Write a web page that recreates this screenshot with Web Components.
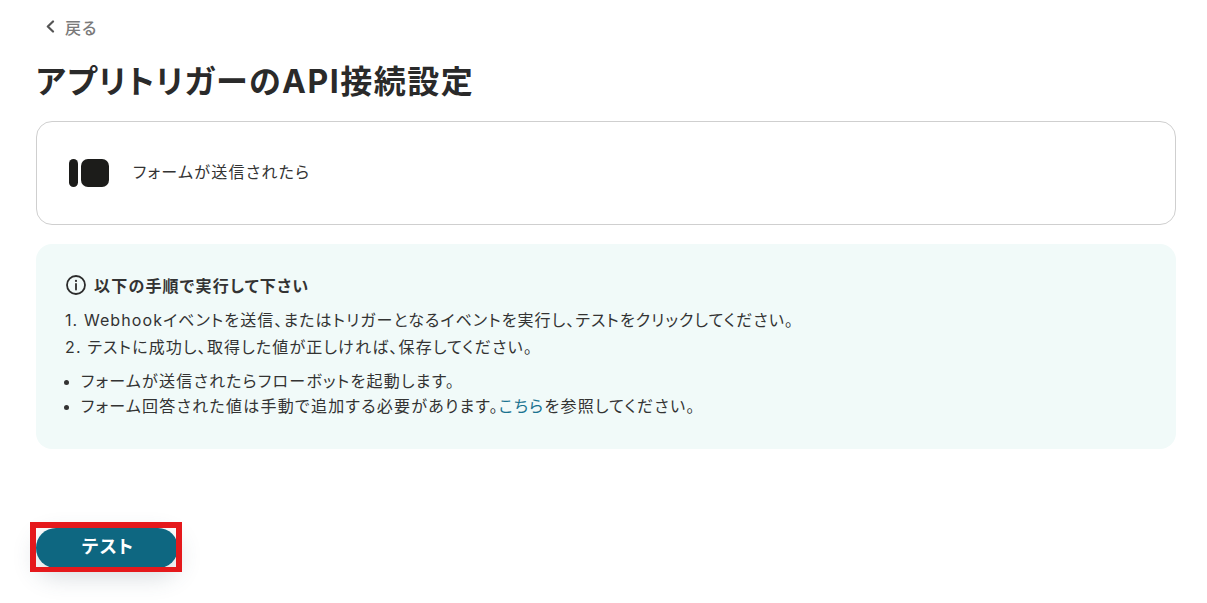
<!DOCTYPE html>
<html lang="ja">
<head>
<meta charset="utf-8">
<title>アプリトリガーのAPI接続設定</title>
<style>
  html, body { margin: 0; background: #fff; }
  body {
    font-family: Inter, "Noto Sans CJK JP", "Noto Sans", sans-serif;
    font-feature-settings: "palt";
    letter-spacing: .075em;
    color: #2c2c2c;
    height: 603px;
    overflow: hidden;
  }
</style>
</head>
<body>
<trigger-page>
  <back-link slot="back">戻る</back-link>
  <span slot="title">アプリトリガーのAPI接続設定</span>
  <app-card slot="card">フォームが送信されたら</app-card>
  <notice-box slot="notice"></notice-box>
  <test-button slot="action">テスト</test-button>
</trigger-page>

<script>
class TriggerPage extends HTMLElement {
  constructor() {
    super()
    this.attachShadow({ mode: 'open' })
    this.shadowRoot.innerHTML = `
    <style>
      :host { display: block; padding: 0 31px 0 36px; }
      .title {
        margin: 0;
        font-size: 32px;
        line-height: 44px;
        font-weight: 700;
        letter-spacing: 1.5px;
        color: #2a2a2a;
        padding-top: 21px;
        padding-bottom: 17px;
      }
      .stack { display: flex; flex-direction: column; gap: 19px; }
      .action { padding-top: 79px; }
    </style>
    <slot name="back"></slot>
    <h1 class="title"><slot name="title"></slot></h1>
    <div class="stack">
      <slot name="card"></slot>
      <slot name="notice"></slot>
    </div>
    <div class="action"><slot name="action"></slot></div>
    `
  }
}

class BackLink extends HTMLElement {
  constructor() {
    super()
    this.attachShadow({ mode: 'open' })
    this.shadowRoot.innerHTML = `
    <style>
      :host {
        display: flex;
        align-items: center;
        gap: 8px;
        height: 25px;
        padding: 14px 0 0 8px;
        font-size: 16px;
        font-weight: 500;
        color: #7a7a7a;
        letter-spacing: .06em;
      }
      svg { width: 13px; height: 13px; }
    </style>
    <svg viewBox="0 0 13 13" fill="none" stroke="#555" stroke-width="2.2" stroke-linecap="round" stroke-linejoin="round"><path d="M9 1.5 3.8 6.5 9 11.5"/></svg>
    <slot></slot>
    `
  }
}

class AppCard extends HTMLElement {
  constructor() {
    super()
    this.attachShadow({ mode: 'open' })
    this.shadowRoot.innerHTML = `
    <style>
      :host {
        display: flex;
        align-items: center;
        gap: 23px;
        box-sizing: border-box;
        height: 104px;
        padding: 0 0 0 31px;
        border: 1px solid #cfcfcf;
        border-radius: 16px;
        font-size: 16px;
        letter-spacing: .08em;
        color: #333;
      }
      svg { width: 42px; height: 28px; display: block; }
      .label { padding-bottom: 4px; }
    </style>
    <svg viewBox="0 0 42 28" fill="#1c1c1a">
      <rect x="1" y="0" width="9" height="28" rx="4.5"/>
      <rect x="13" y="0" width="28" height="28" rx="7"/>
    </svg>
    <div class="label"><slot></slot></div>
    `
  }
}

class NoticeBox extends HTMLElement {
  constructor() {
    super()
    this.attachShadow({ mode: 'open' })
    this.shadowRoot.innerHTML = `
    <style>
      :host {
        display: block;
        box-sizing: border-box;
        height: 205px;
        padding: 28px 28px 0 29px;
        border-radius: 16px;
        background: #f1faf9;
        font-size: 16px;
        color: #333;
      }
      .head {
        display: flex;
        align-items: center;
        gap: 7px;
        height: 26px;
        font-size: 16px;
        font-weight: 700;
      }
      svg { width: 22px; height: 22px; display: block; }
      ol, ul { margin: 0; padding: 0; list-style: none; }
      ol { padding-top: 9px; }
      ol li { height: 27px; line-height: 27px; white-space: nowrap; letter-spacing: .073em; }
      ol li:first-child { letter-spacing: .068em; }
      ul { padding-top: 8px; }
      ul li { position: relative; height: 25px; line-height: 25px; padding-left: 16px; white-space: nowrap; letter-spacing: .078em; }
      ul li::before {
        content: '';
        position: absolute;
        left: -1px;
        top: 11px;
        width: 5px;
        height: 5px;
        border-radius: 50%;
        background: #333;
      }
      a { color: #1a7390; text-decoration: none; }
    </style>
    <div class="head">
      <svg viewBox="0 0 22 22" fill="none" stroke="#2c2c2c" stroke-width="1.8">
        <circle cx="11" cy="11" r="9"/>
        <path d="M11 10v5.5" stroke-linecap="round"/>
        <circle cx="11" cy="6.9" r="1.1" fill="#2c2c2c" stroke="none"/>
      </svg>
      以下の手順で実行して下さい
    </div>
    <ol>
      <li>1. Webhookイベントを送信、またはトリガーとなるイベントを実行し、テストをクリックしてください。</li>
      <li>2. テストに成功し、取得した値が正しければ、保存してください。</li>
    </ol>
    <ul>
      <li>フォームが送信されたらフローボットを起動します。</li>
      <li>フォーム回答された値は手動で追加する必要があります。<a href="#">こちら</a>を参照してください。</li>
    </ul>
    `
  }
}

class TestButton extends HTMLElement {
  constructor() {
    super()
    this.attachShadow({ mode: 'open' })
    this.shadowRoot.innerHTML = `
    <style>
      :host { display: inline-block; position: relative; }
      button {
        display: block;
        width: 142px;
        height: 40px;
        padding: 0 0 6px 2px;
        border: 0;
        border-radius: 20px;
        background: #0e6781;
        color: #fff;
        font: 700 18px Inter, "Noto Sans CJK JP", "Noto Sans", sans-serif;
        font-feature-settings: "palt";
        letter-spacing: 1.2px;
        box-shadow: 0 8px 24px rgba(60, 80, 100, .22);
      }
      .mark {
        position: absolute;
        left: -6px;
        top: -6px;
        width: 140px;
        height: 39px;
        border: 6px solid #e5191c;
        border-bottom-width: 5px;
        pointer-events: none;
      }
    </style>
    <button><slot></slot></button>
    <div class="mark"></div>
    `
  }
}

customElements.define('trigger-page', TriggerPage)
customElements.define('back-link', BackLink)
customElements.define('app-card', AppCard)
customElements.define('notice-box', NoticeBox)
customElements.define('test-button', TestButton)
</script>
</body>
</html>
